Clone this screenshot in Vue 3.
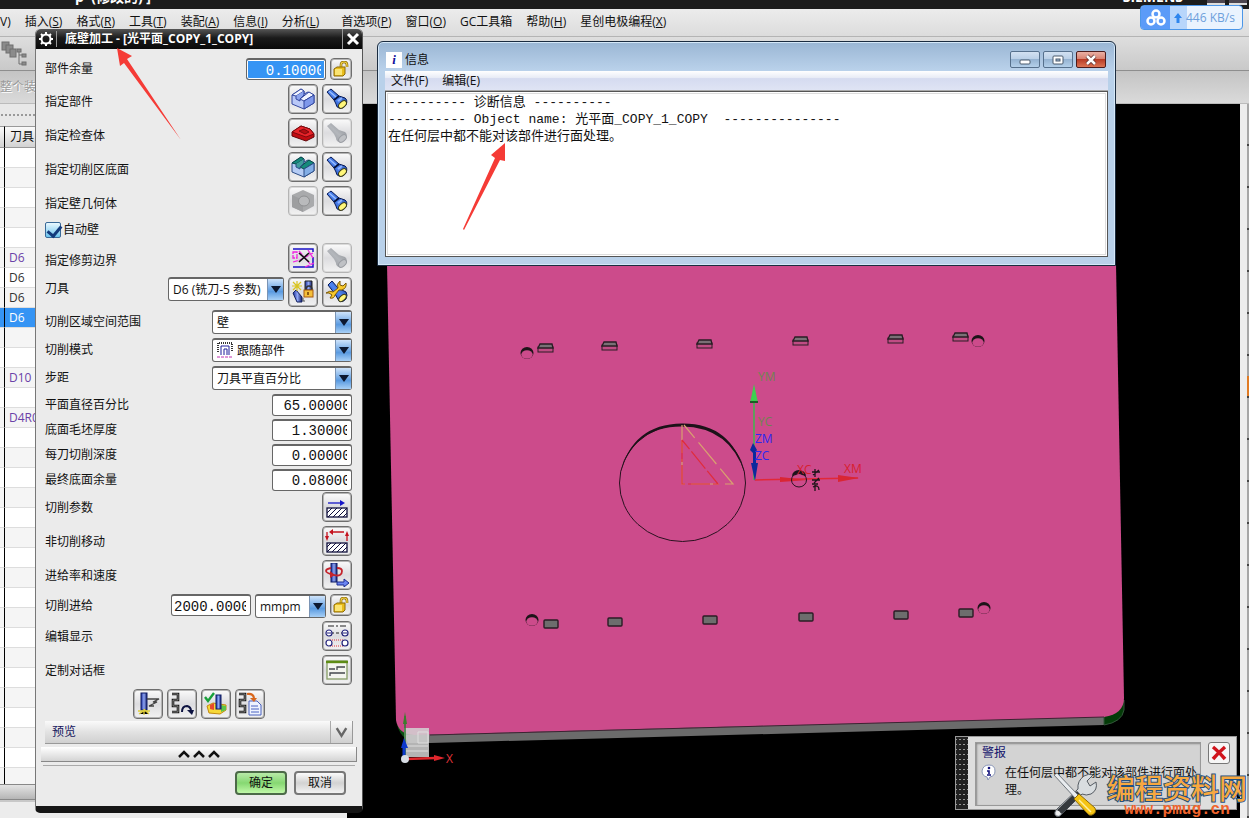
<template>
  <div class="app">
    <svg class="sprite" aria-hidden="true">
      <defs>
        <linearGradient id="gBlue" x1="0" y1="1" x2="1" y2="0">
          <stop offset="0" stop-color="#0b2f9c" />
          <stop offset="0.5" stop-color="#4f86f2" />
          <stop offset="1" stop-color="#0a2370" />
        </linearGradient>
        <linearGradient id="gGray" x1="0" y1="1" x2="1" y2="0">
          <stop offset="0" stop-color="#8d9096" />
          <stop offset="0.5" stop-color="#b4b7bc" />
          <stop offset="1" stop-color="#85888e" />
        </linearGradient>
        <linearGradient id="gMill" x1="0" y1="0" x2="1" y2="0">
          <stop offset="0" stop-color="#1b2f9a" />
          <stop offset="0.5" stop-color="#8ea5f5" />
          <stop offset="1" stop-color="#101c66" />
        </linearGradient>
        <pattern id="hatch" width="5" height="5" patternUnits="userSpaceOnUse">
          <rect width="5" height="5" fill="#fff" />
          <path d="M-1 6L6 -1M4 6L6 4M-1 1L1 -1" stroke="#10103c" stroke-width="1" />
        </pattern>
      </defs>
      <symbol id="torch" viewBox="0 0 24 24">
        <path d="M2 5L6 2L14 9L20 11Q23 13 21 18Q18 22 14 21Q11 20 11 17L9 13Z" fill="url(#gBlue)" stroke="#071a57" />
        <path d="M9 13L14 9" stroke="#05123c" stroke-width="2" />
        <path d="M4 4L11 10" stroke="#9dc0ff" stroke-width="1.2" />
        <path d="M13 14L17 11" stroke="#8fb4ff" stroke-width="2" />
        <ellipse cx="17.500" cy="17.500" rx="2.800" ry="4.600" transform="rotate(48 17.5 17.5)" fill="#fff67a" stroke="#3b3b18" />
      </symbol>
      <symbol id="torchOff" viewBox="0 0 24 24">
        <path d="M2 5L6 2L14 9L20 11Q23 13 21 18Q18 22 14 21Q11 20 11 17L9 13Z" fill="url(#gGray)" />
        <ellipse cx="17.500" cy="17.500" rx="2.800" ry="4.600" transform="rotate(48 17.5 17.5)" fill="#bfc1c5" stroke="#999ca2" />
      </symbol>
      <symbol id="part" viewBox="0 0 24 24">
        <path d="M1 8L10 2L13 4V7L17 5L23 8V16L13 22L1 17Z" fill="#b9c8f8" stroke="#33479f" />
        <path d="M1 8L10 2L13 4L5 9Z M9 12L18 5L23 8L13 14Z" fill="#f2f5ff" stroke="#33479f" />
        <path d="M5 9V12L9 14V12L13 8V4" fill="#8da4ee" stroke="#33479f" />
        <path d="M13 14L23 8V16L13 22Z" fill="#7f98ea" stroke="#33479f" />
      </symbol>
      <symbol id="check" viewBox="0 0 24 24">
        <path d="M1 11L10 5L19 8L23 13V16L15 20L1 15Z" fill="#c10c12" stroke="#60070a" />
        <path d="M1 11L10 5L19 8L23 13L15 16Z" fill="#e8242a" stroke="#7c0a0e" />
        <path d="M8 10L13 8L18 11L14 13Z" fill="#b30e13" stroke="#7c0a0e" />
      </symbol>
      <symbol id="floor" viewBox="0 0 24 24">
        <path d="M1 8L10 2L13 4V7L17 5L23 8V16L13 22L1 17Z" fill="#b5ccf5" stroke="#2d4d86" />
        <path d="M1 8L10 2L13 4L5 9Z M9 12L18 5L23 8L13 14Z" fill="#158a7c" stroke="#084a48" />
        <path d="M5 9V12L9 14V12L13 8V4" fill="#3f9d9c" stroke="#2d4d86" />
        <path d="M13 14L23 8V16L13 22Z" fill="#83aee6" stroke="#2d4d86" />
      </symbol>
      <symbol id="wall" viewBox="0 0 24 24">
        <path d="M12 1L23 6V17L12 23L1 18V6Z" fill="#a9aaac" />
        <path d="M1 6L12 11V23L1 18Z" fill="#9d9ea0" />
        <ellipse cx="13" cy="12" rx="5.500" ry="5" fill="#b9babc" stroke="#8f9092" />
      </symbol>
      <symbol id="trim" viewBox="0 0 24 24">
        <path d="M2 3H22V6M2 21H22V11" fill="none" stroke="#1a10c8" stroke-width="1.5" />
        <path d="M2 6H6V12H2ZM8 5L20 19M2 16L9 14L22 7M14 21L23 17M17 4L22 12" fill="none" stroke="#f024e0" stroke-width="1.3" stroke-dasharray="5 1" />
        <path d="M8 7L18 16M18 7L8 16" stroke="#111" stroke-width="1.6" />
      </symbol>
      <symbol id="newTool" viewBox="0 0 24 24">
        <path d="M2 13L5 10L11 17V22H6Z" fill="url(#gMill)" stroke="#12205e" />
        <path d="M6 1V11M1 6H11M2 2L10 10M10 2L2 10" stroke="#d9c420" stroke-width="1.2" />
        <path d="M14 1H21V10H14Z" fill="url(#gMill)" stroke="#222" />
        <path d="M15 10Q15 6 18 6T21 10" fill="none" stroke="#333" stroke-width="1.5" />
        <rect x="13" y="10" width="9" height="7" fill="#f4bf3a" stroke="#a85a10" />
        <path d="M17 12V15" stroke="#6b3a08" stroke-width="1.5" />
        <path d="M12 18V21H14" stroke="#555" fill="none" />
      </symbol>
      <symbol id="editTool" viewBox="0 0 24 24">
        <path d="M3 5L7 1L13 8L21 12Q23 15 21 19Q18 23 14 21L10 14Z" fill="url(#gBlue)" stroke="#071a57" />
        <ellipse cx="17.500" cy="18" rx="2.500" ry="4.500" transform="rotate(48 17.5 18)" fill="#fff67a" stroke="#3b3b18" />
        <path d="M1 13Q5 10 8 12L13 8Q11 4 15 1L15 5L18 6L21 3Q22 8 17 10L14 10L10 15Q9 19 5 18L7 15L4 13Z" fill="#f7c92c" stroke="#7b5a08" />
      </symbol>
      <symbol id="lock" viewBox="0 0 16 16">
        <path d="M8 8V4Q8 1 11 1T14 4V6" fill="none" stroke="#8d6b06" stroke-width="2.600" />
        <path d="M8 8V4Q8 1 11 1T14 4V6" fill="none" stroke="#f6d648" stroke-width="1.200" />
        <path d="M1 8L4 6H12V13L10 15H1Z" fill="#e9bd1c" stroke="#8d6b06" />
        <path d="M2 8H9V14H2Z" fill="#fbe472" />
      </symbol>
      <symbol id="cutParam" viewBox="0 0 24 24">
        <path d="M3 8H17" stroke="#1616c8" stroke-width="1.300" />
        <path d="M15 5L20 8L15 11Z" fill="#1616c8" />
        <rect x="2" y="13" width="20" height="9" fill="url(#hatch)" stroke="#10103c" stroke-width="1.300" />
      </symbol>
      <symbol id="nonCut" viewBox="0 0 24 24">
        <path d="M6 3H19M2 3V9M22 12V5" stroke="#c4121e" stroke-width="1.300" />
        <path d="M4 3L8 0V6ZM0 7H4L2 12ZM20 7H24L22 2Z" fill="#c4121e" />
        <rect x="2" y="14" width="20" height="9" fill="url(#hatch)" stroke="#10103c" stroke-width="1.300" />
      </symbol>
      <symbol id="feed" viewBox="0 0 24 24">
        <rect x="6" y="0" width="6" height="19" fill="url(#gMill)" stroke="#0e1c66" />
        <path d="M6 5Q1 6 1 8T9 12T17 8Q17 5 12 5" fill="none" stroke="#c4242c" stroke-width="1.800" />
        <path d="M5 8V15L10 12Z" fill="#c4242c" />
        <path d="M12 19H19V16L24 20L19 24V22H12Z" fill="#6c86f2" stroke="#1c2c90" />
      </symbol>
      <symbol id="display" viewBox="0 0 24 24">
        <path d="M3 2H21" stroke="#222" stroke-dasharray="6 2 2 2" />
        <path d="M6 9H18" stroke="#222" stroke-dasharray="3 2" />
        <path d="M5 16H19M5 22H19" stroke="#e0303a" stroke-dasharray="1 1" />
        <g fill="#fff" stroke="#23237c" stroke-width="1.200">
          <circle cx="4" cy="9" r="3" /><circle cx="20" cy="9" r="3" />
          <circle cx="4" cy="19" r="3" /><circle cx="20" cy="19" r="3" />
        </g>
        <path d="M2 9H6M18 9H22" stroke="#23237c" />
      </symbol>
      <symbol id="custom" viewBox="0 0 24 24">
        <rect x="2" y="3" width="20" height="18" fill="#f4f5ef" stroke="#8da36f" stroke-width="1.400" />
        <path d="M1 4H23" stroke="#5d8c14" stroke-width="2.400" />
        <path d="M4 11H10M12 12V9H20M5 18V15H20" fill="none" stroke="#44484e" stroke-width="1.300" />
      </symbol>
      <symbol id="generate" viewBox="0 0 24 24">
        <rect x="5" y="1" width="6" height="17" fill="url(#gMill)" stroke="#0e1c66" />
        <path d="M11 7H23L17 10H21L13 14H18" fill="none" stroke="#444" stroke-width="1.300" />
        <path d="M2 19L14 19M3 22L9 18L13 22M8 17V23" stroke="#e0cf3a" stroke-width="1.300" />
      </symbol>
      <symbol id="replay" viewBox="0 0 24 24">
        <path d="M2 2H8V8H3V14H8V20H2" fill="none" stroke="#1a1a1a" stroke-width="2.600" />
        <path d="M2 2H8V8H3V14H8V20H2" fill="none" stroke="#b8b8b8" stroke-width="0.600" />
        <path d="M12 20Q12 14 17 14Q21 15 21 19" fill="none" stroke="#0c1240" stroke-width="2" />
        <path d="M17 18H24L22 23Z" fill="#0c1240" />
      </symbol>
      <symbol id="verify" viewBox="0 0 24 24">
        <path d="M3 14L9 11L22 13V18L16 22L5 21Z" fill="#f6d838" stroke="#c28a10" />
        <path d="M6 13L10 11V18L6 17Z" fill="#e8492e" />
        <path d="M17 13L22 14V18L17 20Z" fill="#5bc44a" />
        <rect x="12" y="3" width="5" height="14" fill="url(#gMill)" stroke="#0e1c66" />
        <path d="M1 5L4 9L10 1" fill="none" stroke="#18a03a" stroke-width="2.400" />
      </symbol>
      <symbol id="list" viewBox="0 0 24 24">
        <path d="M1 2H7V8H2V14H7V20H1" fill="none" stroke="#1a1a1a" stroke-width="2.600" />
        <path d="M1 2H7V8H2V14H7V20H1" fill="none" stroke="#b8b8b8" stroke-width="0.600" />
        <path d="M11 9H19L23 13V23H11Z" fill="#eef3ff" stroke="#4a62c0" />
        <path d="M13 14H20M13 17H21M13 20H21" stroke="#4a62c0" />
        <path d="M9 2Q15 1 16 6" fill="none" stroke="#d8661c" stroke-width="2.200" />
        <path d="M12 6H19L16 10Z" fill="#d8661c" />
      </symbol>
    </svg>

    <header class="titlebar">
      <span class="doc">p&nbsp;&nbsp;(修改的)&nbsp;]</span>
      <span class="brand">SIEMENS</span>
      <i class="sysbtn"></i>
      <i class="sysbtn"></i>
    </header>

    <nav class="menubar">
      <button v-for="m in menus" :key="m.text" :class="{ wide: m.wide }">{{ m.text }}<template v-if="m.key">(<u>{{ m.key }}</u>)</template></button>
    </nav>

    <div class="toolbar">
      <svg width="28" height="28" viewBox="0 0 28 28">
        <g fill="#8b8b8b" stroke="#6f6f6f">
          <rect x="2" y="2" width="7" height="8" /><rect x="6" y="5" width="7" height="8" /><rect x="10" y="9" width="6" height="8" />
          <path d="M19 10V24H24M19 15H24" fill="none" />
          <rect x="17" y="9" width="4" height="3" /><rect x="22" y="14" width="4" height="3" /><rect x="22" y="22" width="4" height="3" />
        </g>
      </svg>
    </div>
    <div class="toolbar second"><span>整个装配</span></div>

    <main class="work">
      <aside class="navigator">
        <div class="dots"></div>
        <table>
          <thead>
            <tr><th class="edge"></th><th>刀具</th></tr>
          </thead>
          <tbody>
            <tr v-for="(t, i) in toolRows" :key="i" :class="{ active: i === 8 }">
              <td class="edge"></td>
              <td :class="{ violet: violetRows.includes(i) }">{{ t }}</td>
            </tr>
          </tbody>
        </table>
        <div class="hscroll"></div>
        <div class="status"></div>
      </aside>

      <svg class="scene" viewBox="347 104 893 714" preserveAspectRatio="none" role="img" aria-label="模型视图">
        <rect x="347" y="104" width="893" height="714" fill="#000" />
        <path d="M396 718L398 728Q402 738 410 741L420 743L420 730Z" fill="#0c4f12" />
        <path d="M404 735L1104 716V725L430 743H408Z" fill="#6b6b6b" />
        <path d="M1104 716L1124 700V710Q1122 722 1104 725Z" fill="#043b08" stroke="#33553a" />
        <path d="M387 264H1116L1124 698Q1124 714 1104 717L414 735Q398 734 396 720Z" fill="#cc4b8b" />
        <path d="M430 735L1104 717" stroke="#3d2232" stroke-width="1" />

        <g v-for="s in topSlots" :key="s.x">
          <rect :x="s.x" :y="s.y + 3" width="15" height="5" fill="#c04c84" stroke="#2a1c24" />
          <path :d="`M${s.x} ${s.y + 4}L${s.x + 2} ${s.y}H${s.x + 14}L${s.x + 15} ${s.y + 4}Z`" fill="#7a7076" stroke="#2a1c24" stroke-width="1.300" />
        </g>
        <rect v-for="s in bottomSlots" :key="s.x" :x="s.x" :y="s.y" width="14" height="8" rx="1" fill="#6d6d6d" stroke="#2a1c24" stroke-width="1.400" />
        <g v-for="h in holes" :key="h.x + h.y">
          <ellipse :cx="h.x" :cy="h.y" rx="6.500" ry="6" fill="#1c1418" />
          <ellipse :cx="h.x" :cy="h.y + 1.5" rx="5.700" ry="4.300" fill="#cc4b8b" />
        </g>

        <ellipse cx="682.500" cy="483" rx="63" ry="58.500" fill="none" stroke="#2a1220" />
        <path d="M620 474Q632 424 682 423.500T745 474Q730 427 682 426.500T620 474Z" fill="#1c1218" />
        <g fill="none" stroke-width="1.200">
          <path d="M682 425V484L733 484L684 425" stroke="#d8a070" stroke-dasharray="28 6" />
          <path d="M682 440V484L718 484L682 440" stroke="#e02c3c" stroke-dasharray="22 3" />
        </g>

        <path d="M754 480V395" stroke="#3cb84e" stroke-width="1.500" />
        <path d="M754 384L758 403H750Z" fill="#3cd050" />
        <path d="M750 402H758" stroke="#1d5a26" stroke-width="2" />
        <path d="M753 443L757 450L754 454L750 450ZM751 463H758L755 481ZM753 452H756V470H753Z" fill="#0c2a9c" />
        <path d="M755 480L858 478" stroke="#e22838" stroke-width="1.500" />
        <path d="M780 477L808 480L780 482ZM838 475L859 478L838 482Z" fill="#d92634" />
        <path d="M792 476A7 6 0 0 1 806 476L802 475Q799 473 796 475Z" fill="#1c1418" />
        <ellipse cx="799" cy="480" rx="7.500" ry="7" fill="none" stroke="#2a1220" />
        <path d="M812 472H820M813 475L819 470M815 469V477M812 480H820M814 483L819 478M813 487Q819 484 819 490M815 485V491M812 484H818" stroke="#1c1418" stroke-width="1.300" fill="none" />
        <g class="axis">
          <text x="758" y="381" fill="#6f8450">YM</text>
          <text x="758" y="426" fill="#6f8450">YC</text>
          <text x="755" y="443" fill="#2b28f0">ZM</text>
          <text x="755" y="460" fill="#2b28f0">ZC</text>
          <text x="797" y="474" fill="#d8202e">XC</text>
          <text x="844" y="473" fill="#d8202e">XM</text>
        </g>

        <rect x="404" y="728" width="25" height="29" fill="#d4d4d4" fill-opacity="0.850" />
        <path d="M418 732H428V743H418ZM406 746H428M406 751H428" fill="none" stroke="#dedede" />
        <path d="M405 756V716" stroke="#2c7a30" stroke-width="1.500" />
        <path d="M405 712L407 724H403Z" fill="#3b7d2c" />
        <path d="M404 758V744" stroke="#0d38cc" stroke-width="3" />
        <path d="M404 738L408 748H401Z" fill="#0d38cc" />
        <path d="M406 759L436 758" stroke="#e0262c" stroke-width="2.500" />
        <path d="M434 755L445 758L434 761Z" fill="#e0262c" />
        <circle cx="405" cy="759" r="4" fill="#d8dde4" />
        <text class="axis" x="446" y="763" fill="#e0343a">X</text>
      </svg>

      <aside class="strip">
        <i v-for="n in 17" :key="n" :class="{ hot: n === 7 }"></i>
      </aside>
    </main>

    <section class="dialog">
      <header>
        <svg width="20" height="18" viewBox="0 0 20 18">
          <circle cx="10" cy="9" r="4.500" fill="none" stroke="#fff" stroke-width="2" />
          <path d="M10 2V4M10 14V16M3 9H5M15 9H17M5 4L7 6M13 12L15 14M15 4L13 6M7 12L5 14" stroke="#fff" stroke-width="2" />
        </svg>
        <h1>底壁加工 - [光平面_COPY_1_COPY]</h1>
        <button aria-label="关闭">
          <svg width="14" height="14" viewBox="0 0 14 14"><path d="M2 2L12 12M12 2L2 12" stroke="#fff" stroke-width="3" /></svg>
        </button>
      </header>

      <div class="body">
        <div class="row stock">
          <label for="stock">部件余量</label>
          <input id="stock" class="num selected" :value="pad('0.10000')" />
          <button class="ico small" aria-label="解锁"><svg><use href="#lock" /></svg></button>
        </div>
        <div v-for="g in geometry" :key="g.label" class="row pair">
          <span>{{ g.label }}</span>
          <button class="ico" :class="{ off: g.off }" :aria-label="g.label"><svg><use :href="'#' + g.icon" /></svg></button>
          <button class="ico" :class="{ off: g.torch === 'torchOff' }" aria-label="显示"><svg><use :href="'#' + g.torch" /></svg></button>
        </div>
        <div class="row auto">
          <label class="tick"><input v-model="autoWall" type="checkbox" />自动壁</label>
        </div>
        <div class="row pair">
          <span>指定修剪边界</span>
          <button class="ico" aria-label="指定修剪边界"><svg><use href="#trim" /></svg></button>
          <button class="ico off" aria-label="显示"><svg><use href="#torchOff" /></svg></button>
        </div>
        <div class="row tool">
          <label for="tool">刀具</label>
          <div class="combo w-tool">
            <select id="tool"><option>D6 (铣刀-5 参数)</option></select><i></i>
          </div>
          <button class="ico" aria-label="新建刀具"><svg><use href="#newTool" /></svg></button>
          <button class="ico" aria-label="编辑刀具"><svg><use href="#editTool" /></svg></button>
        </div>
        <div v-for="c in combos" :key="c.id" class="row choice">
          <label :for="c.id">{{ c.label }}</label>
          <div class="combo" :class="{ pic: c.pic }">
            <svg v-if="c.pic" width="16" height="16" viewBox="0 0 16 16">
              <path d="M1 10V1H15V10" fill="none" stroke="#333" stroke-width="2" stroke-dasharray="1 1" />
              <path d="M4 13V4H12V13M7 13V7H10V13" fill="none" stroke="#1c1c9c" />
              <path d="M0 15H16" stroke="#c030b0" stroke-dasharray="3 1" />
            </svg>
            <select :id="c.id"><option>{{ c.value }}</option></select><i></i>
          </div>
        </div>
        <div v-for="n in numbers" :key="n.id" class="row value">
          <label :for="n.id">{{ n.label }}</label>
          <input :id="n.id" class="num" :value="pad(n.value)" />
        </div>
        <div v-for="p in params" :key="p.icon" class="row single">
          <span>{{ p.label }}</span>
          <button class="ico" :aria-label="p.label"><svg><use :href="'#' + p.icon" /></svg></button>
        </div>
        <div class="row feed">
          <label for="feedrate">切削进给</label>
          <input id="feedrate" class="num" value="2000.0000" />
          <div class="combo w-unit">
            <select aria-label="单位"><option>mmpm</option></select><i></i>
          </div>
          <button class="ico small" aria-label="解锁"><svg><use href="#lock" /></svg></button>
        </div>
        <div v-for="p in extras" :key="p.icon" class="row single">
          <span>{{ p.label }}</span>
          <button class="ico" :aria-label="p.label"><svg><use :href="'#' + p.icon" /></svg></button>
        </div>
        <div class="actions">
          <button v-for="a in actions" :key="a.icon" class="ico" :aria-label="a.label"><svg><use :href="'#' + a.icon" /></svg></button>
        </div>
      </div>

      <button class="preview">
        <span>预览</span>
        <svg width="22" height="22" viewBox="0 0 22 22"><path d="M6 7L11 15L16 7" fill="none" stroke="#666" stroke-width="2.500" /></svg>
      </button>
      <button class="collapse" aria-label="折叠">
        <svg v-for="n in 3" :key="n" width="12" height="8" viewBox="0 0 12 8"><path d="M1 7L6 2L11 7" fill="none" stroke="#111" stroke-width="2.500" /></svg>
      </button>
      <div class="buttons">
        <button class="ok">确定</button>
        <button>取消</button>
      </div>
    </section>

    <section class="info">
      <header>
        <b>i</b>
        <h2>信息</h2>
        <button aria-label="最小化"><svg width="14" height="12" viewBox="0 0 14 12"><rect x="2" y="6" width="10" height="4" rx="1" fill="#fff" stroke="#4a5a6c" /></svg></button>
        <button aria-label="最大化"><svg width="14" height="12" viewBox="0 0 14 12"><rect x="2" y="2" width="10" height="8" rx="1" fill="#fff" stroke="#4a5a6c" /><rect x="5" y="5" width="4" height="2" fill="#9fb8d4" stroke="#4a5a6c" /></svg></button>
        <button class="close" aria-label="关闭"><svg width="14" height="12" viewBox="0 0 14 12"><path d="M3 2L11 10M11 2L3 10" stroke="#5b2d2a" stroke-width="4" /><path d="M3 2L11 10M11 2L3 10" stroke="#fff" stroke-width="2.500" /></svg></button>
      </header>
      <nav>
        <button>文件(F)</button>
        <button>编辑(E)</button>
      </nav>
      <pre>{{ report }}</pre>
    </section>

    <section class="alert">
      <div class="grip"></div>
      <div class="message">
        <h3>警报</h3>
        <svg width="16" height="16" viewBox="0 0 16 16">
          <path d="M8 1Q14 1 14 7Q14 12 9 13L7 16L6 13Q1 12 1 7Q2 1 8 1Z" fill="#fff" stroke="#8a97b8" />
          <circle cx="8" cy="4" r="1.300" fill="#10107c" />
          <path d="M6 7H8V10M6 11H10" fill="none" stroke="#10107c" stroke-width="1.600" />
        </svg>
        <p>在任何层中都不能对该部件进行面处理。</p>
      </div>
      <button aria-label="关闭警报">
        <svg width="16" height="16" viewBox="0 0 16 16"><path d="M2 2Q7 6 14 14M14 2Q8 7 2 14" stroke="#d0141c" stroke-width="3.500" fill="none" /></svg>
      </button>
    </section>

    <button class="speed">
      <span class="cloud">
        <svg width="22" height="18" viewBox="0 0 22 18">
          <g fill="none" stroke="#fff" stroke-width="2.500"><circle cx="11" cy="5" r="3.500" /><circle cx="6" cy="12" r="3.500" /><circle cx="16" cy="12" r="3.500" /></g>
        </svg>
      </span>
      <svg width="10" height="12" viewBox="0 0 10 12"><path d="M5 1L9 6H6.500V11H3.500V6H1Z" fill="#2e86ee" /></svg>
      <span>446 KB/s</span>
    </button>

    <svg class="mark one" width="66" height="94" viewBox="116 47 66 94">
      <path d="M117 48L132 56L127 59L181 140L124 63L120 66Z" fill="#f53b36" />
    </svg>
    <svg class="mark two" width="44" height="88" viewBox="462 143 44 88">
      <path d="M505 143L505 161L500 160L464 230L463 229L495 158L491 155Z" fill="#f53b36" />
    </svg>

    <div class="watermark">
      <svg width="48" height="46" viewBox="0 0 48 46">
        <path d="M3 44Q0 41 4 37L25 17Q24 9 31 4Q36 1 40 3L34 9L37 14L43 10Q45 18 38 22Q33 24 29 22L9 42Q6 46 3 44Z" fill="#d9dde0" stroke="#555b62" />
        <path d="M4 38L24 19L28 23L9 42Z" fill="#35393d" />
        <circle cx="5" cy="41" r="2" fill="#eee" />
        <path d="M1 3L4 1L25 23L22 26Z" fill="#e9ecef" stroke="#70767c" />
        <path d="M21 27L26 22L42 36Q44 41 39 43Q36 44 34 41Z" fill="#f5c313" stroke="#8d6c08" />
        <path d="M26 28L38 40" stroke="#fff0a0" stroke-width="1.500" />
      </svg>
      <div>
        <strong>编程资料网</strong>
        <a href="#">www.pmug.cn</a>
      </div>
    </div>
  </div>
</template>

<script setup>
import { ref } from "vue";

const autoWall = ref(true);

// 数值框按 9 位宽度右对齐
const pad = (v) => v.padStart(9);

const menus = [
  { text: "V)" },
  { text: "插入", key: "S" },
  { text: "格式", key: "R" },
  { text: "工具", key: "T" },
  { text: "装配", key: "A" },
  { text: "信息", key: "I" },
  { text: "分析", key: "L" },
  { text: "首选项", key: "P", wide: true },
  { text: "窗口", key: "O" },
  { text: "GC工具箱" },
  { text: "帮助", key: "H" },
  { text: "星创电极编程", key: "X" },
];

const toolRows = Array(33).fill("");
Object.assign(toolRows, { 5: "D6", 6: "D6", 7: "D6", 8: "D6", 11: "D10", 13: "D4R0.5" });
const violetRows = [5, 11, 13];

const geometry = [
  { label: "指定部件", icon: "part", torch: "torch" },
  { label: "指定检查体", icon: "check", torch: "torchOff" },
  { label: "指定切削区底面", icon: "floor", torch: "torch" },
  { label: "指定壁几何体", icon: "wall", torch: "torch", off: true },
];

const combos = [
  { id: "range", label: "切削区域空间范围", value: "壁" },
  { id: "pattern", label: "切削模式", value: "跟随部件", pic: true },
  { id: "step", label: "步距", value: "刀具平直百分比" },
];

const numbers = [
  { id: "percent", label: "平面直径百分比", value: "65.00000" },
  { id: "blank", label: "底面毛坯厚度", value: "1.30000" },
  { id: "depth", label: "每刀切削深度", value: "0.00000" },
  { id: "final", label: "最终底面余量", value: "0.08000" },
];

const params = [
  { label: "切削参数", icon: "cutParam" },
  { label: "非切削移动", icon: "nonCut" },
  { label: "进给率和速度", icon: "feed" },
];

const extras = [
  { label: "编辑显示", icon: "display" },
  { label: "定制对话框", icon: "custom" },
];

const actions = [
  { label: "生成", icon: "generate" },
  { label: "重播", icon: "replay" },
  { label: "确认", icon: "verify" },
  { label: "列表", icon: "list" },
];

const topSlots = [
  { x: 538, y: 344 },
  { x: 602, y: 342 },
  { x: 697, y: 340 },
  { x: 793, y: 337 },
  { x: 888, y: 335 },
  { x: 953, y: 333 },
];
const bottomSlots = [
  { x: 544, y: 620 },
  { x: 608, y: 618 },
  { x: 703, y: 616 },
  { x: 799, y: 613 },
  { x: 894, y: 611 },
  { x: 959, y: 609 },
];
const holes = [
  { x: 527, y: 353 },
  { x: 978, y: 341 },
  { x: 532, y: 620 },
  { x: 984, y: 608 },
];

const report = [
  "---------- 诊断信息 ----------",
  "---------- Object name: 光平面_COPY_1_COPY  ---------------",
  "在任何层中都不能对该部件进行面处理。",
].join("\n");
</script>

<style>
body {
  margin: 0;
}
</style>

<style scoped>
* {
  box-sizing: border-box;
}
.app {
  position: relative;
  display: flex;
  flex-direction: column;
  height: 100vh;
  overflow: hidden;
  background: #e8e8e8;
  color: #111;
  font: 12px/16px "Open Sans", "Noto Sans CJK SC", sans-serif;
}
.sprite {
  position: absolute;
  width: 0;
  height: 0;
}
button {
  margin: 0;
  padding: 0;
  border: 0;
  background: none;
  font: inherit;
  color: inherit;
  white-space: nowrap;
}
h1,
h2,
h3,
p,
pre {
  margin: 0;
  font-size: 12px;
  font-weight: normal;
}

/* 主窗口 */
.titlebar {
  display: flex;
  align-items: flex-end;
  gap: 4px;
  height: 9px;
  flex: none;
  padding: 0 2px 4px 75px;
  overflow: hidden;
  background: #1c1c1c;
  color: #fff;
  font-weight: bold;
  font-size: 14px;
}
.titlebar .brand {
  margin-left: auto;
  margin-right: 20px;
}
.sysbtn {
  width: 18px;
  height: 8px;
  background: #4c4650;
  border-bottom: 2px solid #ddd;
}
.menubar {
  display: flex;
  align-items: center;
  gap: 14px;
  height: 28px;
  flex: none;
  padding-bottom: 2px;
  background: linear-gradient(#ececec, #dcdcdc);
  border-bottom: 1px solid #b4b4b4;
}
.menubar .wide {
  margin-left: 8px;
}
.toolbar {
  display: flex;
  align-items: center;
  height: 34px;
  flex: none;
  background: linear-gradient(#dedede, #c9c9c9);
  border-bottom: 1px solid #8e8e8e;
}
.toolbar.second {
  height: 33px;
  background: linear-gradient(#c4c4c4, #dadada);
  border-bottom-color: #bbb;
  color: #9a9a9a;
  text-shadow: 1px 1px #fff;
}
.work {
  display: flex;
  flex: 1;
  min-height: 0;
}
.navigator {
  display: flex;
  flex-direction: column;
  width: 347px;
  flex: none;
  overflow: hidden;
}
.dots {
  height: 22px;
  flex: none;
  background: radial-gradient(circle, #999 1px, transparent 1px) 0 9px / 4px 4px repeat-x;
}
.navigator table {
  display: block;
  flex: 1;
  min-height: 0;
  overflow: hidden;
  border-spacing: 0;
  background: #fff;
}
.navigator th {
  width: 342px;
  height: 22px;
  padding: 0 0 0 5px;
  background: linear-gradient(#fafafa, #d2d2d2);
  border-top: 1px solid #999;
  border-bottom: 1px solid #999;
  font-weight: normal;
  text-align: left;
}
.navigator td {
  height: 20px;
  padding: 0 0 0 4px;
  border-bottom: 1px solid #ddd;
  color: #333;
}
.navigator .edge {
  width: 5px;
  min-width: 5px;
  padding: 0;
  border-right: 1px solid #000;
}
.navigator tr:nth-child(even) td {
  background: #f5f5f5;
}
.navigator .violet {
  color: #6b42a8;
}
.navigator tr.active td {
  background: #3594f4;
  color: #fff;
}
.hscroll {
  height: 16px;
  flex: none;
  background: linear-gradient(#e4e4e4, #b5b5b5);
  border-top: 1px solid #888;
  border-bottom: 1px solid #888;
}
.status {
  height: 18px;
  flex: none;
  border-top: 2px solid #c8c8c8;
  background: #ececec;
}
.scene {
  display: block;
  flex: 1;
  min-width: 0;
  height: 100%;
}
.axis {
  font: 12px "Open Sans", sans-serif;
}
.strip {
  display: flex;
  flex-direction: column;
  width: 9px;
  flex: none;
  padding-left: 7px;
  background: #ededed;
}
.strip i {
  flex: 1;
  background: #a6a6a6;
  border-bottom: 2px solid #444;
}
.strip .hot {
  background: linear-gradient(#a6a6a6 50%, #e07b24 50%);
}

/* 底壁加工对话框 */
.dialog {
  position: absolute;
  left: 35px;
  top: 29px;
  width: 328px;
  border-left: 1px solid #777;
  border-right: 1px solid #555;
  border-bottom: 7px solid #161616;
  border-radius: 5px;
  background: #ebebeb;
}
.dialog header {
  display: flex;
  align-items: center;
  height: 20px;
  padding-right: 2px;
  background: linear-gradient(#555, #1a1a1a 45%, #0a0a0a);
  border-radius: 5px 5px 0 0;
  color: #fff;
}
.dialog h1 {
  flex: 1;
  padding-left: 8px;
  border-left: 1px solid #999;
  font-weight: bold;
}
.dialog header button {
  display: flex;
  align-items: center;
  justify-content: flex-end;
  width: 18px;
  height: 20px;
  border-left: 1px solid #999;
}
.body {
  padding: 5px 10px 0 9px;
}
.row {
  display: flex;
  align-items: flex-start;
  gap: 4px;
  height: 34px;
}
.row > :first-child {
  margin-right: auto;
}
.pair > span {
  line-height: 36px;
}
.stock {
  height: 30px;
  align-items: center;
}
.auto {
  height: 23px;
}
.tool {
  height: 31px;
}
.tool > label {
  line-height: 24px;
}
.choice {
  height: 28px;
  align-items: center;
}
.value {
  height: 25px;
  align-items: center;
}
.single > span {
  line-height: 32px;
}
.feed > label {
  line-height: 24px;
}
.feed {
  height: 27px;
}
.tick {
  display: flex;
  align-items: center;
  gap: 2px;
  height: 20px;
}
.tick input {
  appearance: none;
  width: 16px;
  height: 16px;
  margin: 0;
  border: 1px solid #3a6a98;
  border-radius: 2px;
  background: linear-gradient(#e9f8ff, #6cc4ee);
}
.tick input:checked::after {
  content: "";
  display: block;
  width: 6px;
  height: 11px;
  margin: 0 0 0 4px;
  border: solid #123a7c;
  border-width: 0 3px 3px 0;
  transform: rotate(40deg);
}
.ico {
  display: flex;
  align-items: center;
  justify-content: center;
  width: 30px;
  height: 30px;
  flex: none;
  border: 1px solid #6e6e6e;
  border-radius: 4px;
  background: linear-gradient(#fbfbfb, #dcdcdf 50%, #f2f2f2);
  box-shadow: inset 0 0 0 1px #b4b4b4;
}
.ico.off {
  border-color: #b4b4b4;
  box-shadow: inset 0 0 0 1px #dadada;
}
.ico svg {
  width: 24px;
  height: 24px;
}
.ico.small {
  width: 22px;
  height: 22px;
}
.ico.small svg {
  width: 16px;
  height: 16px;
}
.num {
  width: 80px;
  height: 22px;
  padding: 2px 4px 0 2px;
  border: 1px solid #666;
  border-top-width: 2px;
  border-radius: 3px;
  background: #fff;
  color: #111;
  font: 14px "Liberation Mono", monospace;
}
.num.selected {
  background: #3594f4;
  color: #fff;
  box-shadow: inset 0 0 0 1px #fff;
}
.combo {
  position: relative;
  width: 140px;
  height: 24px;
}
.combo select {
  appearance: none;
  width: 100%;
  height: 100%;
  padding: 0 16px 0 4px;
  border: 1px solid #666;
  border-top-width: 2px;
  border-radius: 3px;
  background: #fff;
  color: #111;
  font: inherit;
}
.combo.pic select {
  padding-left: 24px;
}
.combo svg {
  position: absolute;
  left: 5px;
  top: 4px;
}
.combo i {
  position: absolute;
  top: 2px;
  right: 1px;
  bottom: 1px;
  width: 16px;
  background: linear-gradient(#cfe4fb, #5a9ae0 60%, #a8d0f6);
  border-left: 1px solid #7a94b4;
  pointer-events: none;
}
.combo i::after {
  content: "";
  display: block;
  width: 0;
  margin: 7px auto 0;
  border: 5px solid transparent;
  border-top: 7px solid #0c1830;
  border-bottom: 0;
}
.w-tool {
  width: 116px;
}
.w-unit {
  width: 71px;
}
.actions {
  display: flex;
  justify-content: center;
  gap: 4px;
  height: 31px;
}
.preview {
  display: flex;
  align-items: center;
  width: calc(100% - 18px);
  height: 23px;
  margin: 1px 9px 3px;
  padding-left: 7px;
  background: linear-gradient(#fafafa, #e2e2e2 50%, #d0d0d0);
  border-bottom: 1px solid #999;
  border-right: 1px solid #999;
  color: #14145c;
}
.preview svg {
  margin-left: auto;
  border-left: 1px solid #aaa;
}
.collapse {
  display: flex;
  align-items: center;
  justify-content: center;
  gap: 3px;
  width: calc(100% - 10px);
  height: 15px;
  margin: 0 5px 3px;
  background: linear-gradient(#fff, #d4d4d4);
  border-right: 1px solid #888;
  border-bottom: 1px solid #888;
}
.buttons {
  display: flex;
  justify-content: flex-end;
  gap: 7px;
  margin: 0 7px;
  padding: 5px 9px 11px 0;
  border-top: 1px solid #aaa;
}
.buttons button {
  width: 52px;
  height: 24px;
  border: 2px solid #777;
  border-radius: 4px;
  background: linear-gradient(#fbfbfb, #d2d2d2 50%, #f2f2f2);
}
.buttons .ok {
  border-color: #4c6a48;
  background: linear-gradient(#b8eaa8, #86d872 50%, #c0f8a8);
}

/* 信息窗口 */
.info {
  position: absolute;
  left: 377px;
  top: 41px;
  display: flex;
  flex-direction: column;
  width: 739px;
  height: 225px;
  padding: 2px 7px 8px;
  border: 1px solid #1b2c40;
  border-radius: 6px 6px 0 0;
  background: linear-gradient(#9ab6d4, #b9d1ea 28px, #b9d1ea);
  box-shadow: inset 0 0 0 1px #d5e8f8;
}
.info header {
  display: flex;
  align-items: center;
  gap: 3px;
  height: 27px;
  flex: none;
  padding: 4px 2px 0 1px;
}
.info header b {
  width: 16px;
  background: #fff;
  color: #10109c;
  font: italic bold 13px/16px "Liberation Serif", serif;
  text-align: center;
}
.info h2 {
  flex: 1;
}
.info header button {
  display: flex;
  align-items: center;
  justify-content: center;
  width: 30px;
  height: 17px;
  border: 1px solid #56708c;
  border-radius: 2px;
  background: linear-gradient(#d2e1f1, #b9cfe6 48%, #95b3d2 50%, #b4d0ea);
}
.info header .close {
  border-color: #4c1c1c;
  background: linear-gradient(#eab0a4, #d8806e 48%, #b83c26 50%, #dc7454);
}
.info nav {
  display: flex;
  gap: 14px;
  height: 20px;
  flex: none;
  padding-left: 6px;
  background: linear-gradient(#fff, #e8ecf6 35%, #d5dbf0 40%, #dfe4f4);
  border-bottom: 1px solid #aaa;
}
.info pre {
  flex: 1;
  padding: 2px 2px 0;
  border: 1px solid #555;
  outline: 1px solid #ddd;
  outline-offset: -3px;
  background: #fff;
  font: 13px/17px "Liberation Mono", "Noto Sans CJK SC", monospace;
}

/* 警报 */
.alert {
  position: absolute;
  right: 12px;
  bottom: 8px;
  display: flex;
  align-items: flex-start;
  gap: 7px;
  width: 282px;
  height: 74px;
  padding: 5px 6px 5px 0;
  background: #dedede;
  border: 1px solid #999;
}
.grip {
  align-self: stretch;
  width: 12px;
  margin: -5px 0;
  background: radial-gradient(circle, #999 1px, transparent 1px) 2px 0 / 4px 5px #222;
}
.message {
  display: grid;
  grid-template-columns: 16px 1fr;
  grid-template-rows: 21px 1fr;
  column-gap: 8px;
  width: 228px;
  height: 64px;
  padding: 0 0 0 5px;
  border: 1px solid #999;
  box-shadow: inset 1px 1px 2px #888;
  background: #d3d3d3;
}
.message h3 {
  grid-column: span 2;
  padding-left: 1px;
  line-height: 20px;
  color: #14146c;
}
.message p {
  line-height: 17px;
}
.alert > button {
  display: flex;
  align-items: center;
  justify-content: center;
  width: 22px;
  height: 22px;
  border: 1px solid #777;
  border-radius: 3px;
  background: #f6f6f6;
}

.speed {
  position: absolute;
  top: 5px;
  right: 6px;
  display: flex;
  align-items: center;
  gap: 3px;
  width: 103px;
  height: 25px;
  border: 1px solid #4b96e8;
  border-radius: 4px;
  background: linear-gradient(90deg, #b8d6fb 46px, #eaf3fe 46px);
  color: #6d9fdc;
  overflow: hidden;
}
.cloud {
  display: flex;
  align-items: center;
  justify-content: center;
  width: 29px;
  height: 25px;
  background: #5b9bf8;
}
.mark {
  position: absolute;
  pointer-events: none;
}
.mark.one {
  left: 116px;
  top: 47px;
}
.mark.two {
  left: 462px;
  top: 143px;
}
.watermark {
  position: absolute;
  right: 2px;
  bottom: 0;
  display: flex;
  align-items: flex-start;
  gap: 6px;
}
.watermark div {
  display: flex;
  flex-direction: column;
  align-items: center;
}
.watermark strong {
  color: #f7a840;
  font: 500 28px/30px "Noto Sans CJK SC", sans-serif;
  -webkit-text-stroke: 2px #24517e;
  paint-order: stroke fill;
}
.watermark a {
  color: #f0642c;
  font: bold 16px/16px "Liberation Mono", monospace;
  text-decoration: none;
}
</style>
